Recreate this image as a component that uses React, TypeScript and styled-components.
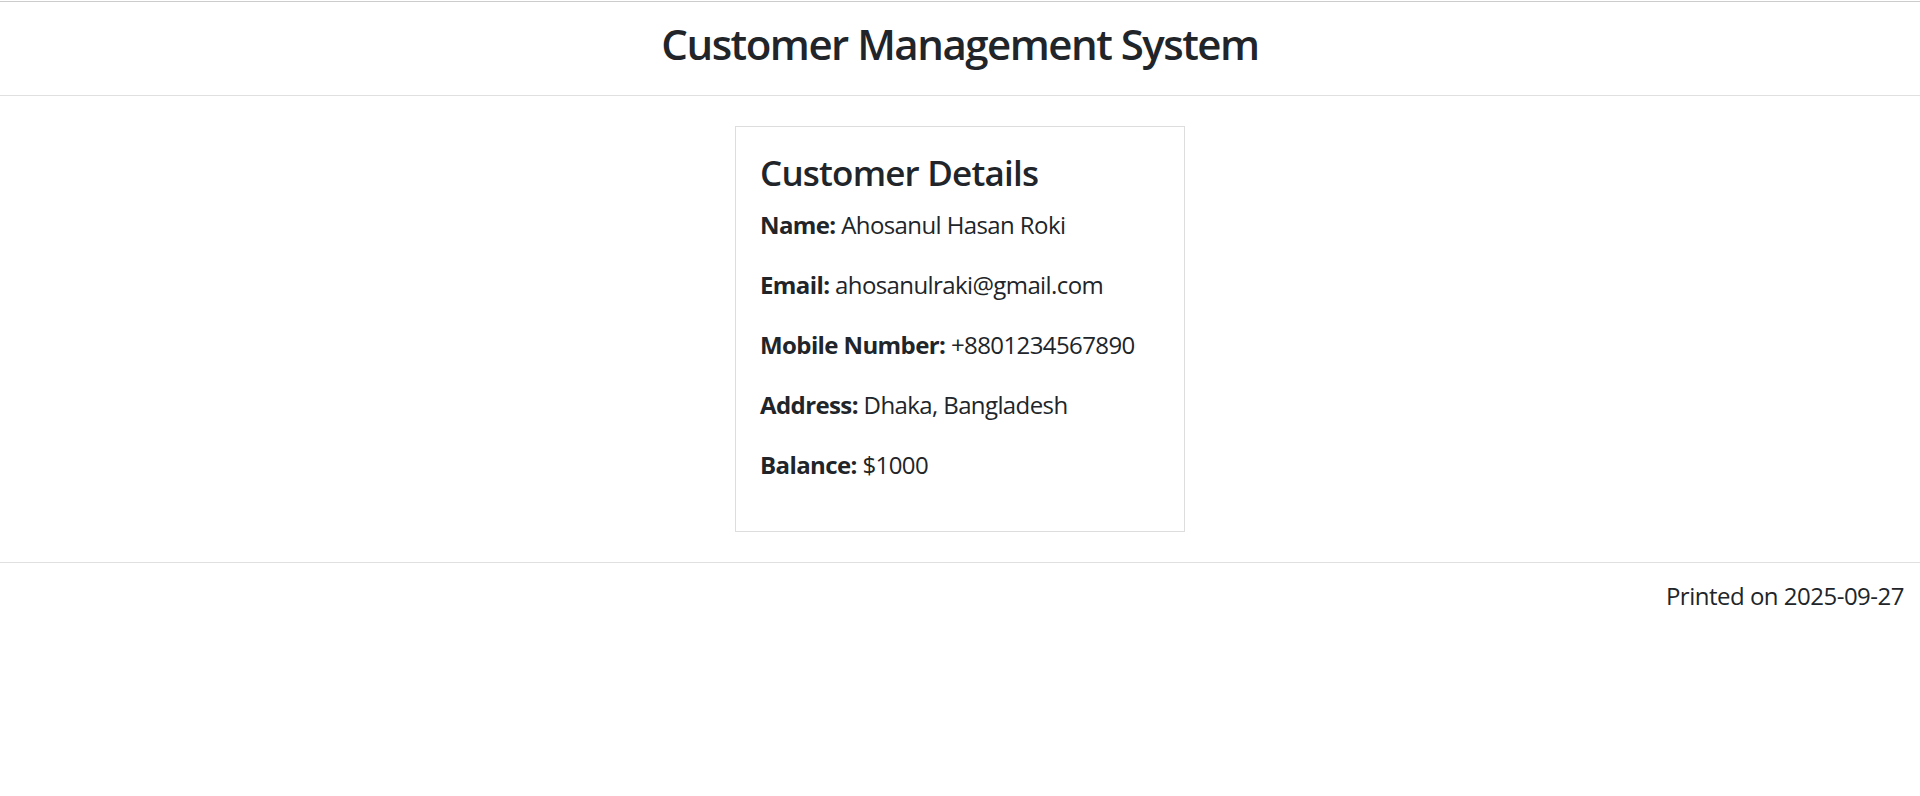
import React from "react";
import styled, { createGlobalStyle } from "styled-components";

const GlobalStyle = createGlobalStyle`
  html, body {
    margin: 0;
    padding: 0;
    background: #ffffff;
  }
  body {
    font-family: "Open Sans", "Noto Sans", "Liberation Sans", sans-serif;
    color: #212529;
    font-size: 24px;
    line-height: 1.5;
  }
  * { box-sizing: border-box; }
`;

const Page = styled.div`
  padding-top: 1px;
`;

const Header = styled.header`
  border-top: 1px solid #cccccc;
  border-bottom: 1px solid #e0e0e0;
  padding: 16px 0 25px;
  text-align: center;
`;

const Title = styled.h1`
  margin: 0;
  font-size: 42px;
  font-weight: 600;
  line-height: 52px;
  letter-spacing: -1.5px;
`;

const Main = styled.main`
  padding: 30px 0;
`;

const Card = styled.section`
  width: 450px;
  margin: 0 auto;
  border: 1px solid #dddddd;
  padding: 24px;
`;

const CardTitle = styled.h2`
  margin: 0 0 13px;
  font-size: 35px;
  font-weight: 600;
  line-height: 43px;
  letter-spacing: -0.8px;
`;

const Field = styled.p`
  margin: 0 0 24px;
  font-size: 24px;
  line-height: 36px;
  letter-spacing: -0.6px;
`;

const Label = styled.strong`
  font-weight: 700;
`;

const Footer = styled.footer`
  border-top: 1px solid #e0e0e0;
  padding: 15px 16px;
  text-align: right;
  font-size: 24px;
  line-height: 36px;
  letter-spacing: -0.5px;
`;

const fields: { label: string; value: string }[] = [
  { label: "Name:", value: "Ahosanul Hasan Roki" },
  { label: "Email:", value: "ahosanulraki@gmail.com" },
  { label: "Mobile Number:", value: "+8801234567890" },
  { label: "Address:", value: "Dhaka, Bangladesh" },
  { label: "Balance:", value: "$1000" },
];

export default function App() {
  return (
    <Page>
      <GlobalStyle />
      <Header>
        <Title>Customer Management System</Title>
      </Header>
      <Main>
        <Card>
          <CardTitle>Customer Details</CardTitle>
          {fields.map((f) => (
            <Field key={f.label}>
              <Label>{f.label}</Label> {f.value}
            </Field>
          ))}
        </Card>
      </Main>
      <Footer>Printed on 2025-09-27</Footer>
    </Page>
  );
}
